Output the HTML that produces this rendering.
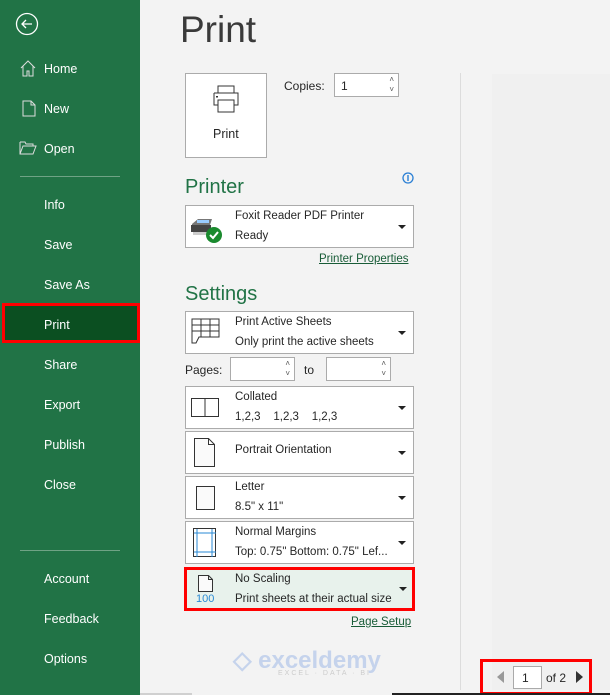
<!DOCTYPE html>
<html><head><style>
*{margin:0;padding:0;box-sizing:border-box}
body{width:610px;height:695px;overflow:hidden;background:#f3f3f3;font-family:"Liberation Sans",sans-serif;position:relative;font-size:12px;color:#262626}
.side{position:absolute;left:0;top:0;width:140px;height:695px;background:#217346;color:#fff}
.si{position:absolute;left:44px;font-size:12.5px}
.sep{position:absolute;left:20px;width:100px;height:1px;background:#6fa385}
.a{position:absolute}
.box{position:absolute;left:185px;width:229px;height:43px;background:#fff;border:1px solid #ababab;font-size:11.5px}
.box .t1{position:absolute;left:49px;top:4px}
.box .t2{position:absolute;left:49px;top:24px}
.box .dd{position:absolute;right:7px;top:19px;width:0;height:0;border-left:4px solid transparent;border-right:4px solid transparent;border-top:4px solid #222}
.h{position:absolute;left:185px;color:#217346;font-size:20px}
.lnk{position:absolute;color:#185c37;text-decoration:underline;font-size:11.5px}
.spin{position:absolute;background:#fff;border:1px solid #ababab;height:24px}
.spin i{position:absolute;right:4px;font-style:normal;font-size:8px;color:#555;line-height:8px}
</style></head><body>
<div class="side">
<svg class="a" style="left:15px;top:12px" width="24" height="24" viewBox="0 0 24 24"><circle cx="12" cy="12" r="10.5" fill="none" stroke="#fff" stroke-width="1.3"/><path d="M17 12H7M11 8l-4 4 4 4" fill="none" stroke="#fff" stroke-width="1.3"/></svg>
<svg class="a" style="left:19px;top:60px" width="18" height="17" viewBox="0 0 18 17"><path d="M2 8L9 1l7 7M4 6v10h4v-5h2v5h4V6" fill="none" stroke="#ddd" stroke-width="1"/></svg>
<span class="si" style="top:62px">Home</span>
<svg class="a" style="left:22px;top:100px" width="14" height="17" viewBox="0 0 14 17"><path d="M1 1h8l4 4v11H1z M9 1v4h4" fill="none" stroke="#ddd"/></svg>
<span class="si" style="top:102px">New</span>
<svg class="a" style="left:19px;top:141px" width="18" height="14" viewBox="0 0 18 14"><path d="M1 1h5l1 2h7v2 M1 1v12h13l3-8H4L1 13" fill="none" stroke="#ddd"/></svg>
<span class="si" style="top:142px">Open</span>
<div class="sep" style="top:176px"></div>
<span class="si" style="top:198px">Info</span>
<span class="si" style="top:238px">Save</span>
<span class="si" style="top:278px">Save As</span>
<div class="a" style="left:2px;top:303px;width:138px;height:40px;background:#0b4f21;border:3px solid #f00"></div>
<span class="si" style="top:318px">Print</span>
<span class="si" style="top:358px">Share</span>
<span class="si" style="top:398px">Export</span>
<span class="si" style="top:438px">Publish</span>
<span class="si" style="top:478px">Close</span>
<div class="sep" style="top:550px"></div>
<span class="si" style="top:572px">Account</span>
<span class="si" style="top:612px">Feedback</span>
<span class="si" style="top:652px">Options</span>
</div>
<div class="a" style="left:180px;top:9px;font-size:37px;color:#3a3a3a">Print</div>
<div class="a" style="left:185px;top:73px;width:82px;height:85px;background:#fff;border:1px solid #ababab">
<svg class="a" style="left:24px;top:10px" width="32" height="30" viewBox="0 0 32 30"><path d="M8 9V2h16v7M4 9h24v12h-4M8 21H4V9" fill="none" stroke="#333"/><rect x="8" y="16" width="16" height="12" fill="#fff" stroke="#333"/><rect x="6" y="12" width="2" height="1.5" fill="#333"/></svg>
<span class="a" style="left:27px;top:53px;font-size:12.5px">Print</span></div>
<span class="a" style="left:284px;top:79px">Copies:</span>
<div class="spin" style="left:334px;top:73px;width:65px"><span class="a" style="left:6px;top:5px">1</span><i style="top:2px">˄</i><i style="top:12px">˅</i></div>
<div class="h" style="top:176px">Printer</div>
<svg class="a" style="left:402px;top:172px" width="12" height="12"><circle cx="6" cy="6" r="5" fill="none" stroke="#2a7fd4" stroke-width="1.3"/><rect x="5.3" y="3" width="1.4" height="6" fill="#2a7fd4"/></svg>
<div class="box" style="top:205px">
<svg class="a" style="left:3px;top:8px" width="36" height="30" viewBox="0 0 36 30"><path d="M3 10l6-5h14l-2 6H3z" fill="#777"/><path d="M8 6h12v3H8z" fill="#9cf"/><rect x="2" y="11" width="20" height="7" fill="#444"/><rect x="4" y="18" width="14" height="3" fill="#ccc"/><circle cx="25" cy="21" r="8" fill="#1a8a2e"/><path d="M21 21l3 3 5-6" fill="none" stroke="#fff" stroke-width="2"/></svg>
<span class="t1">Foxit Reader PDF Printer</span><span class="t2">Ready</span><div class="dd"></div></div>
<span class="lnk" style="left:319px;top:253px">Printer Properties</span>
<div class="h" style="top:283px">Settings</div>
<div class="box" style="top:311px">
<svg class="a" style="left:5px;top:6px" width="30" height="28"><path d="M1 1h27v18H8l-3 6H1z M1 7h27M1 13h27M10 1v18M19 1v18" fill="none" stroke="#333"/></svg>
<span class="t1">Print Active Sheets</span><span class="t2">Only print the active sheets</span><div class="dd"></div></div>
<span class="a" style="left:185px;top:363px">Pages:</span>
<div class="spin" style="left:230px;top:357px;width:65px"><i style="top:2px">˄</i><i style="top:12px">˅</i></div>
<span class="a" style="left:304px;top:363px">to</span>
<div class="spin" style="left:326px;top:357px;width:65px"><i style="top:2px">˄</i><i style="top:12px">˅</i></div>
<div class="box" style="top:386px">
<svg class="a" style="left:5px;top:11px" width="30" height="20"><path d="M.5 .5h27v18H.5zM14 .5v18" fill="none" stroke="#333"/></svg>
<span class="t1">Collated</span><span class="t2">1,2,3&nbsp;&nbsp;&nbsp; 1,2,3&nbsp;&nbsp;&nbsp; 1,2,3</span><div class="dd"></div></div>
<div class="box" style="top:431px">
<svg class="a" style="left:8px;top:6px" width="24" height="30"><path d="M.5 .5h14l6 6v22H.5z M14.5 .5v6h6" fill="#fafafa" stroke="#333"/></svg>
<span class="t1" style="top:12px">Portrait Orientation</span><div class="dd"></div></div>
<div class="box" style="top:476px">
<svg class="a" style="left:10px;top:9px" width="20" height="26"><rect x=".5" y=".5" width="18" height="23" fill="#fafafa" stroke="#333"/></svg>
<span class="t1">Letter</span><span class="t2">8.5" x 11"</span><div class="dd"></div></div>
<div class="box" style="top:521px">
<svg class="a" style="left:7px;top:6px" width="26" height="30"><rect x=".5" y=".5" width="22" height="28" fill="#fff" stroke="#333"/><path d="M4 1v28M19 1v28M1 5h22M1 24h22" stroke="#2a8ad4"/></svg>
<span class="t1">Normal Margins</span><span class="t2">Top: 0.75" Bottom: 0.75" Lef...</span><div class="dd"></div></div>
<div class="box" style="top:567px;left:184px;width:231px;height:44px;background:#e8f2ec;border:3px solid #f00">
<svg class="a" style="left:11px;top:5px" width="16" height="18"><path d="M.5 .5h10l4 4v12H.5z M10.5 .5v4h4" fill="#fafafa" stroke="#333"/></svg>
<span class="a" style="left:9px;top:23px;font-size:11px;color:#2a8ad4">100</span>
<span class="t1" style="left:48px;top:3px">No Scaling</span><span class="t2" style="left:48px;top:23px">Print sheets at their actual size</span><div class="dd" style="right:5px;top:17px"></div></div>
<span class="lnk" style="left:351px;top:616px">Page Setup</span>
<div class="a" style="left:460px;top:73px;width:1px;height:617px;background:#dcdcdc"></div>
<div class="a" style="left:492px;top:74px;width:118px;height:616px;background:#f0f0f0"></div>
<div class="a" style="left:233px;top:646px;font-size:24px;font-weight:bold;color:#c5d3ec">&#9671; exceldemy</div>
<div class="a" style="left:278px;top:670px;font-size:7px;letter-spacing:2px;color:#ccc">EXCEL · DATA · BI</div>
<div class="a" style="left:480px;top:659px;width:112px;height:36px;border:3px solid #f00"></div>
<div class="a" style="left:497px;top:671px;border-top:6px solid transparent;border-bottom:6px solid transparent;border-right:7px solid #999"></div>
<div class="a" style="left:513px;top:666px;width:29px;height:23px;background:#fff;border:1px solid #aaa;padding:4px 0 0 8px">1</div>
<span class="a" style="left:546px;top:671px">of 2</span>
<div class="a" style="left:576px;top:671px;border-top:6px solid transparent;border-bottom:6px solid transparent;border-left:7px solid #333"></div>
<div class="a" style="left:140px;top:693px;width:52px;height:2px;background:#d0d0d0"></div>
<div class="a" style="left:392px;top:693px;width:218px;height:2px;background:#222"></div>
</body></html>
